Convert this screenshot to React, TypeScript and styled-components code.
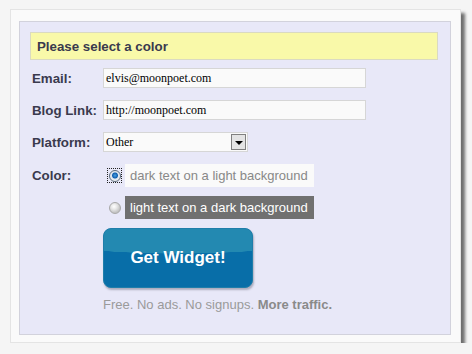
import React from 'react';
import styled, { createGlobalStyle } from 'styled-components';

const GlobalStyle = createGlobalStyle`
    html, body {
        margin: 0;
        padding: 0;
        background: #f5f5f5;
    }
    body {
        font-family: "Liberation Sans", Arial, sans-serif;
    }
`

const Card = styled.div`
    margin: 9px 0 0 10px;
    width: 451px;
    height: 334px;
    box-sizing: border-box;
    padding: 11px 9px 7px 8px;
    background: #fafafa;
    border: 1px solid #e4e4e4;
    box-shadow: 4px 4px 3px #6e6e6e;
`

const Panel = styled.div`
    height: 100%;
    box-sizing: border-box;
    background: #e8e8f8;
    border: 1px solid #d2d2dc;
    padding-top: 10px;
`

const Banner = styled.div`
    margin: 0 12px 0 10px;
    height: 28px;
    box-sizing: border-box;
    padding-left: 6px;
    display: flex;
    align-items: center;
    background: #f9f9a9;
    border: 1px solid #dadac2;
    color: #3a3a4e;
    font-size: 13.3px;
    font-weight: bold;
`

const Form = styled.div`
    display: grid;
    grid-template-columns: 71px 1fr;
    row-gap: 12px;
    align-items: center;
    margin-top: 8px;
    padding-left: 12px;
`

const Label = styled.div<{ $top?: boolean }>`
    color: #3a3a4e;
    font-size: 13.3px;
    font-weight: bold;
    align-self: ${p => p.$top ? 'start' : 'center'};
    line-height: ${p => p.$top ? '23px' : 'normal'};
`

const TextBox = styled.div<{ $width: number }>`
    width: ${p => p.$width}px;
    height: 20px;
    box-sizing: border-box;
    background: #fafafa;
    border: 1px solid #d6d6d6;
    padding-left: 2px;
    display: flex;
    align-items: center;
    font-family: "Liberation Serif", "Times New Roman", serif;
    font-size: 12px;
    color: #000;
`

const Select = styled(TextBox)`
    justify-content: space-between;
    padding-right: 1px;
`

const DropButton = styled.div`
    width: 15px;
    height: 16px;
    box-sizing: border-box;
    border: 1px solid #808080;
    background: #e4e4e4;
    display: flex;
    align-items: center;
    justify-content: center;
    &::after {
        content: '';
        border-left: 4px solid transparent;
        border-right: 4px solid transparent;
        border-top: 4px solid #000;
        margin-top: 1px;
    }
`

const RadioGroup = styled.div`
    display: flex;
    flex-direction: column;
    gap: 9px;
`

const RadioRow = styled.div`
    display: flex;
    align-items: center;
    gap: 3px;
    padding-left: 4px;
`

const RadioFocus = styled.div<{ $focused?: boolean }>`
    width: 15px;
    height: 15px;
    box-sizing: border-box;
    border: 1px dotted ${p => p.$focused ? '#222' : 'transparent'};
    display: flex;
    align-items: center;
    justify-content: center;
`

const RadioDot = styled.div<{ $checked?: boolean }>`
    width: 12px;
    height: 12px;
    box-sizing: border-box;
    border-radius: 50%;
    border: 1px solid ${p => p.$checked ? '#5a6a7a' : '#a8a8a8'};
    background: ${p => p.$checked
        ? 'radial-gradient(circle at 50% 45%, #4aa0e0 0, #1060b0 2.5px, #dfe6ee 3.5px, #f4f4f4 6px)'
        : 'radial-gradient(circle at 40% 35%, #ffffff 0, #e6e6e6 3px, #c4c4c4 6px)'};
`

const ChoiceBox = styled.div<{ $dark?: boolean }>`
    width: 189px;
    height: 23px;
    box-sizing: border-box;
    padding-left: 5px;
    display: flex;
    align-items: center;
    font-size: 13px;
    background: ${p => p.$dark ? '#707070' : '#fafafa'};
    color: ${p => p.$dark ? '#ffffff' : '#888888'};
`

const Actions = styled.div`
    margin: 9px 0 0 83px;
`

const WidgetButton = styled.div`
    width: 150px;
    height: 60px;
    box-sizing: border-box;
    border-radius: 8px;
    border: 1px solid #1f7eaa;
    background:
        radial-gradient(ellipse 160% 60% at 50% 0%, #2389b1 0, #2389b1 70%, transparent 71%),
        #086ea8;
    box-shadow: 1px 2px 2px rgba(60, 60, 80, 0.35);
    display: flex;
    align-items: center;
    justify-content: center;
    color: #fff;
    font-size: 17px;
    font-weight: bold;
`

const Tagline = styled.div`
    margin-top: 9px;
    font-size: 13px;
    color: #9a9a9a;
    b {
        color: #8a8a8a;
    }
`

const App: React.FC = () => {
    return <>
        <GlobalStyle />
        <Card>
            <Panel>
                <Banner>Please select a color</Banner>
                <Form>
                    <Label>Email:</Label>
                    <TextBox $width={263}>elvis@moonpoet.com</TextBox>
                    <Label>Blog Link:</Label>
                    <TextBox $width={263}>http://moonpoet.com</TextBox>
                    <Label>Platform:</Label>
                    <Select $width={145}>
                        <span>Other</span>
                        <DropButton />
                    </Select>
                    <Label $top>Color:</Label>
                    <RadioGroup>
                        <RadioRow>
                            <RadioFocus $focused><RadioDot $checked /></RadioFocus>
                            <ChoiceBox>dark text on a light background</ChoiceBox>
                        </RadioRow>
                        <RadioRow>
                            <RadioFocus><RadioDot /></RadioFocus>
                            <ChoiceBox $dark>light text on a dark background</ChoiceBox>
                        </RadioRow>
                    </RadioGroup>
                </Form>
                <Actions>
                    <WidgetButton>Get Widget!</WidgetButton>
                    <Tagline>Free. No ads. No signups. <b>More traffic.</b></Tagline>
                </Actions>
            </Panel>
        </Card>
    </>
}

export default App;
